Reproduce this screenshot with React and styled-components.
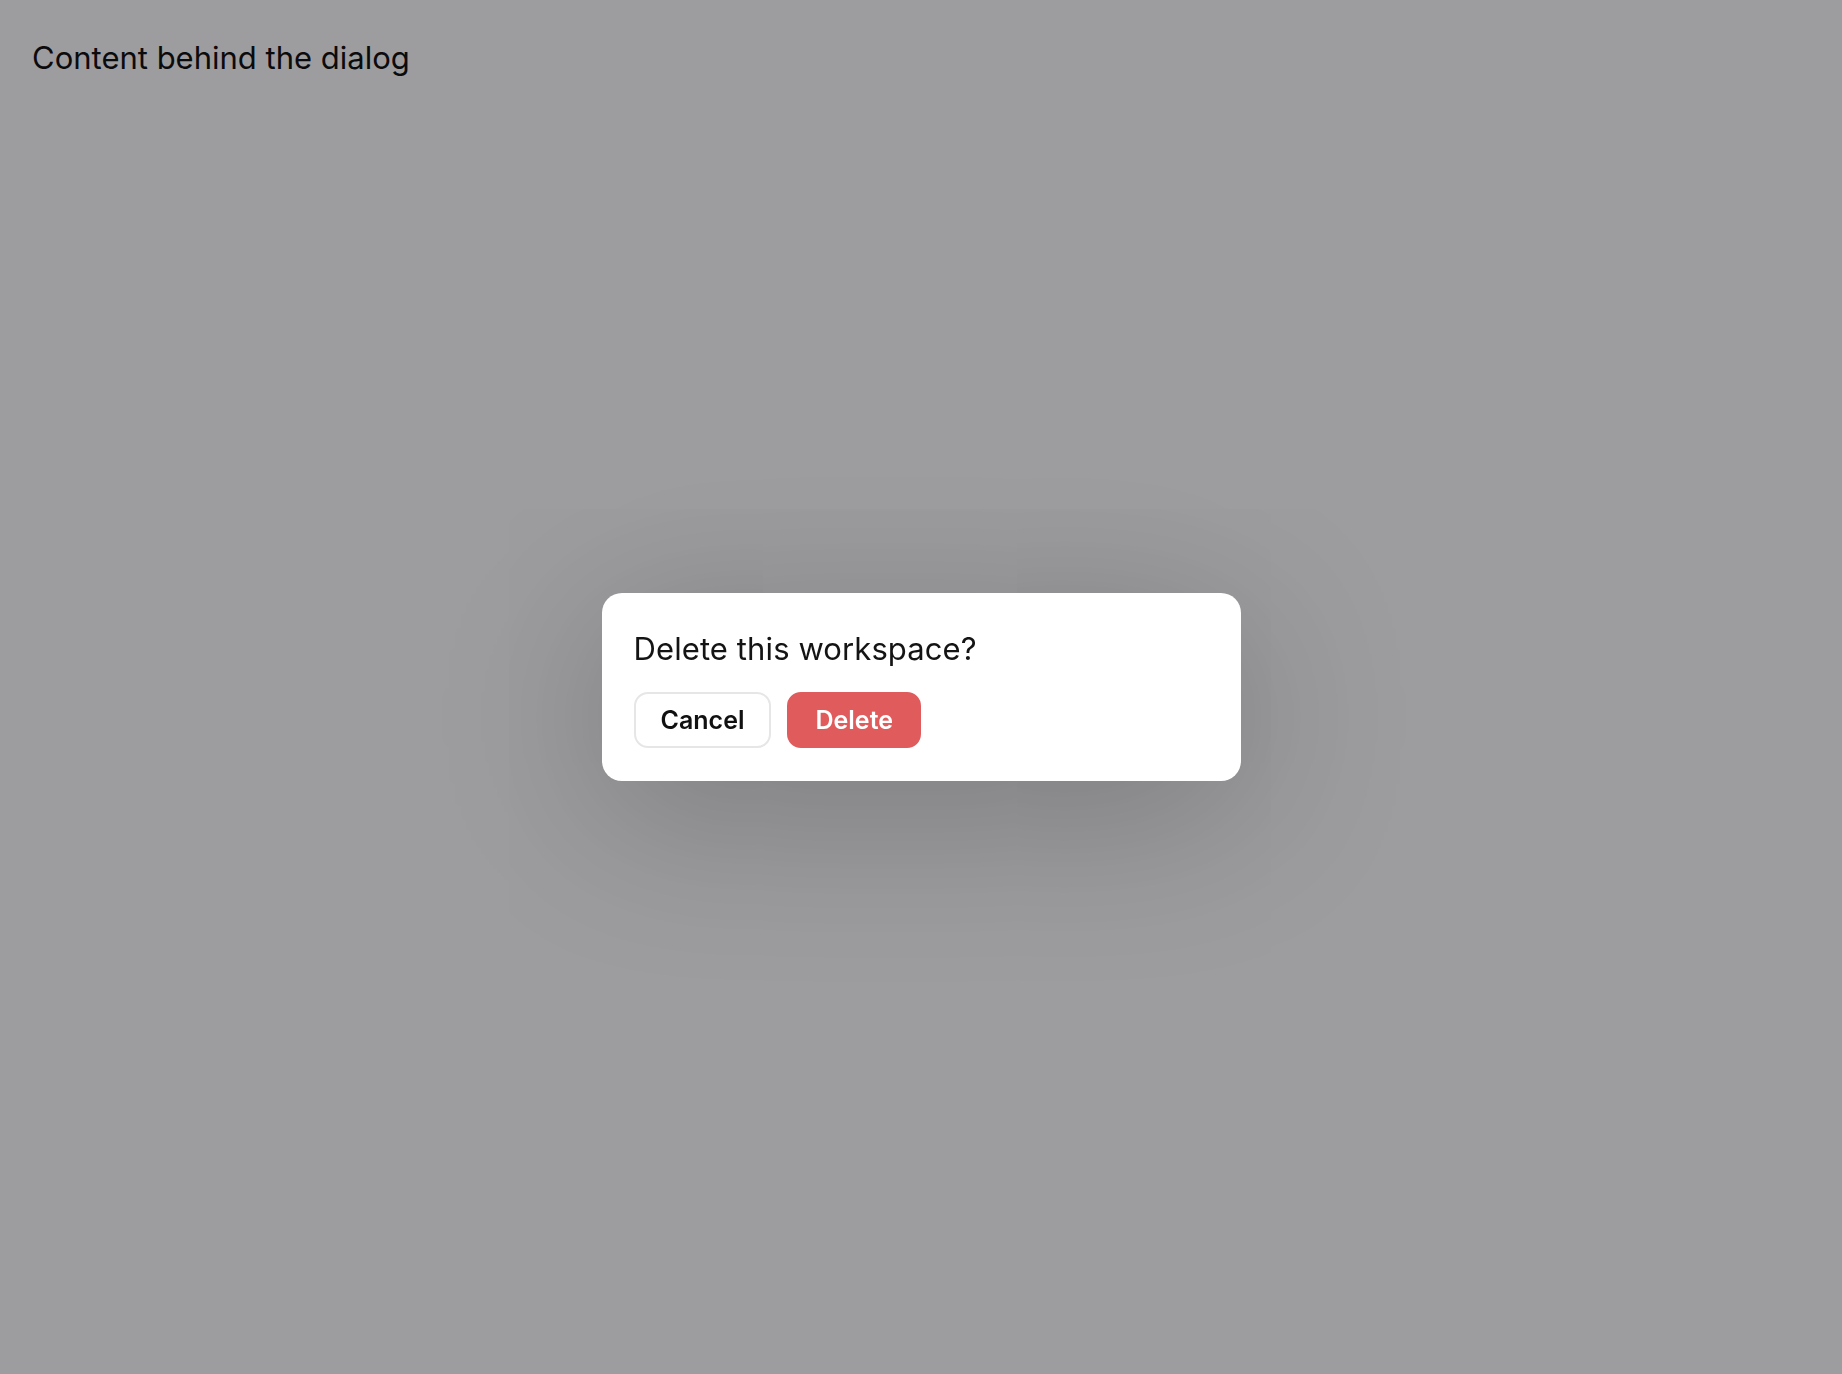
import styled, { createGlobalStyle } from "styled-components";

const GlobalStyle = createGlobalStyle`
  * {
    box-sizing: border-box;
  }

  html,
  body {
    margin: 0;
    padding: 0;
    background: #ffffff;
  }

  body {
    font-family: Inter, "Noto Sans", "Liberation Sans", sans-serif;
    color: #111111;
  }
`;

const Page = styled.div`
  position: relative;
  width: 100vw;
  height: 100vh;
  overflow: hidden;
`;

const BehindText = styled.p`
  margin: 0;
  padding: 40px 32px;
  font-size: 31px;
  line-height: 36px;
  font-weight: 400;
  color: #111111;
`;

const Overlay = styled.div`
  position: fixed;
  inset: 0;
  background: rgba(2, 2, 8, 0.39);
  display: flex;
  align-items: center;
  justify-content: center;
`;

const Dialog = styled.div`
  width: 639px;
  padding: 38px 32px 33px;
  background: #ffffff;
  border-radius: 20px;
  box-shadow: 0 30px 170px rgba(0, 0, 0, 0.22);
  display: flex;
  flex-direction: column;
  gap: 25px;
`;

const Title = styled.h2`
  margin: 0;
  font-size: 31px;
  line-height: 36px;
  font-weight: 400;
  letter-spacing: 0.1px;
  color: #141414;
`;

const Actions = styled.div`
  display: flex;
  gap: 16px;
`;

const Button = styled.button`
  height: 56px;
  padding: 0 ${(p) => (p.$danger ? "26px" : "25px")};
  border-radius: 14px;
  border: 2px solid ${(p) => (p.$danger ? "#e05c5c" : "#e6e6e6")};
  background: ${(p) => (p.$danger ? "#e05c5c" : "#ffffff")};
  color: ${(p) => (p.$danger ? "#ffffff" : "#111111")};
  font-family: inherit;
  font-size: 25px;
  font-weight: 600;
  line-height: 1;
  cursor: pointer;
`;

export default function App() {
  return (
    <Page>
      <GlobalStyle />
      <BehindText>Content behind the dialog</BehindText>

      {/* 삭제 확인 모달 */}
      <Overlay>
        <Dialog role="dialog" aria-modal="true">
          <Title>Delete this workspace?</Title>
          <Actions>
            <Button>Cancel</Button>
            <Button $danger>Delete</Button>
          </Actions>
        </Dialog>
      </Overlay>
    </Page>
  );
}
